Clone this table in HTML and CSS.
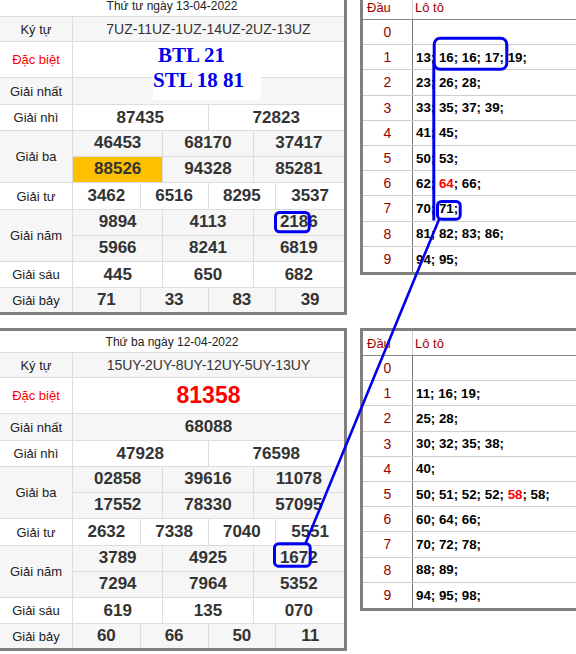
FILE: index.html
```html
<!DOCTYPE html>
<html lang="vi">
<head>
<meta charset="utf-8">
<title>Kết quả xổ số</title>
<link rel="stylesheet" href="styles.css">
</head>
<body>
<div class="page">

  <section class="kq">
    <div class="cap">Thứ tư ngày 13-04-2022</div>
    <div class="row r-kytu alt"><div class="lbl">Ký tự</div><div class="code">7UZ-11UZ-1UZ-14UZ-2UZ-13UZ</div></div>
    <div class="row r-db"><div class="lbl red">Đặc biệt</div><div class="vals c1"><div class="v"></div></div></div>
    <div class="row r-nhat alt"><div class="lbl">Giải nhất</div><div class="vals c1"><div class="v"></div></div></div>
    <div class="row r-std"><div class="lbl">Giải nhì</div><div class="vals c2"><div class="v">87435</div><div class="v">72823</div></div></div>
    <div class="row r-dbl alt"><div class="lbl">Giải ba</div><div class="vals c3 two"><div class="v">46453</div><div class="v">68170</div><div class="v">37417</div><div class="v hl">88526</div><div class="v">94328</div><div class="v">85281</div></div></div>
    <div class="row r-tu"><div class="lbl">Giải tư</div><div class="vals c4"><div class="v">3462</div><div class="v">6516</div><div class="v">8295</div><div class="v">3537</div></div></div>
    <div class="row r-dbl alt"><div class="lbl">Giải năm</div><div class="vals c3 two"><div class="v">9894</div><div class="v">4113</div><div class="v">2186</div><div class="v">5966</div><div class="v">8241</div><div class="v">6819</div></div></div>
    <div class="row r-std"><div class="lbl">Giải sáu</div><div class="vals c3"><div class="v">445</div><div class="v">650</div><div class="v">682</div></div></div>
    <div class="row r-bay alt"><div class="lbl">Giải bảy</div><div class="vals c4"><div class="v">71</div><div class="v">33</div><div class="v">83</div><div class="v">39</div></div></div>
    <div class="stamp"><span class="s1">BTL 21</span><span class="s2">STL 18 81</span></div>
  </section>

  <section class="loto">
    <div class="lrow head"><div class="dau">Đầu</div><div class="lt">Lô tô</div></div>
    <div class="lrow"><div class="dau">0</div><div class="lt"></div></div>
    <div class="lrow"><div class="dau">1</div><div class="lt"><span>13; 16; 16; 17; 19;</span></div></div>
    <div class="lrow"><div class="dau">2</div><div class="lt"><span>23; 26; 28;</span></div></div>
    <div class="lrow"><div class="dau">3</div><div class="lt"><span>33; 35; 37; 39;</span></div></div>
    <div class="lrow"><div class="dau">4</div><div class="lt"><span>41; 45;</span></div></div>
    <div class="lrow"><div class="dau">5</div><div class="lt"><span>50; 53;</span></div></div>
    <div class="lrow"><div class="dau">6</div><div class="lt"><span>62; <b class="hot">64</b>; 66;</span></div></div>
    <div class="lrow"><div class="dau">7</div><div class="lt"><span>70; 71;</span></div></div>
    <div class="lrow"><div class="dau">8</div><div class="lt"><span>81; 82; 83; 86;</span></div></div>
    <div class="lrow"><div class="dau">9</div><div class="lt"><span>94; 95;</span></div></div>
  </section>

  <section class="kq">
    <div class="cap">Thứ ba ngày 12-04-2022</div>
    <div class="row r-kytu alt"><div class="lbl">Ký tự</div><div class="code">15UY-2UY-8UY-12UY-5UY-13UY</div></div>
    <div class="row r-db"><div class="lbl red">Đặc biệt</div><div class="vals c1"><div class="v big">81358</div></div></div>
    <div class="row r-nhat alt"><div class="lbl">Giải nhất</div><div class="vals c1"><div class="v">68088</div></div></div>
    <div class="row r-std"><div class="lbl">Giải nhì</div><div class="vals c2"><div class="v">47928</div><div class="v">76598</div></div></div>
    <div class="row r-dbl alt"><div class="lbl">Giải ba</div><div class="vals c3 two"><div class="v">02858</div><div class="v">39616</div><div class="v">11078</div><div class="v">17552</div><div class="v">78330</div><div class="v">57095</div></div></div>
    <div class="row r-tu"><div class="lbl">Giải tư</div><div class="vals c4"><div class="v">2632</div><div class="v">7338</div><div class="v">7040</div><div class="v">5551</div></div></div>
    <div class="row r-dbl alt"><div class="lbl">Giải năm</div><div class="vals c3 two"><div class="v">3789</div><div class="v">4925</div><div class="v">1672</div><div class="v">7294</div><div class="v">7964</div><div class="v">5352</div></div></div>
    <div class="row r-std"><div class="lbl">Giải sáu</div><div class="vals c3"><div class="v">619</div><div class="v">135</div><div class="v">070</div></div></div>
    <div class="row r-bay alt"><div class="lbl">Giải bảy</div><div class="vals c4"><div class="v">60</div><div class="v">66</div><div class="v">50</div><div class="v">11</div></div></div>
  </section>

  <section class="loto">
    <div class="lrow head"><div class="dau">Đầu</div><div class="lt">Lô tô</div></div>
    <div class="lrow"><div class="dau">0</div><div class="lt"></div></div>
    <div class="lrow"><div class="dau">1</div><div class="lt"><span>11; 16; 19;</span></div></div>
    <div class="lrow"><div class="dau">2</div><div class="lt"><span>25; 28;</span></div></div>
    <div class="lrow"><div class="dau">3</div><div class="lt"><span>30; 32; 35; 38;</span></div></div>
    <div class="lrow"><div class="dau">4</div><div class="lt"><span>40;</span></div></div>
    <div class="lrow"><div class="dau">5</div><div class="lt"><span>50; 51; 52; 52; <b class="hot">58</b>; 58;</span></div></div>
    <div class="lrow"><div class="dau">6</div><div class="lt"><span>60; 64; 66;</span></div></div>
    <div class="lrow"><div class="dau">7</div><div class="lt"><span>70; 72; 78;</span></div></div>
    <div class="lrow"><div class="dau">8</div><div class="lt"><span>88; 89;</span></div></div>
    <div class="lrow"><div class="dau">9</div><div class="lt"><span>94; 95; 98;</span></div></div>
  </section>

</div>

<svg class="marks" width="576" height="654" viewBox="0 0 576 654" aria-hidden="true">
  <g fill="none" stroke="#0000f0" stroke-width="3" stroke-linecap="round">
    <rect x="434.2" y="38.2" width="72.6" height="31" rx="6"/>
    <line x1="433.8" y1="62" x2="433.8" y2="220.5" stroke-linecap="butt"/>
    <rect x="437.5" y="201.5" width="22.7" height="17.7" rx="4"/>
    <line x1="439" y1="219.5" x2="305.5" y2="543.5" stroke-width="2.6"/>
    <rect x="275.5" y="212.5" width="33.7" height="19.3" rx="4"/>
    <rect x="274.5" y="543.8" width="35.7" height="22.4" rx="4"/>
  </g>
</svg>
</body>
</html>
```

FILE: styles.css
```css
* { box-sizing: border-box; }

html, body {
  margin: 0;
  padding: 0;
}

body {
  width: 576px;
  height: 654px;
  overflow: hidden;
  background: #fff;
  font-family: "Liberation Sans", Arial, sans-serif;
  color: #222;
}

.page {
  display: grid;
  grid-template-columns: 350px 240px;
  column-gap: 13px;
  row-gap: 13px;
  align-items: start;
  margin: -8px 0 0 -3px;
}

/* ---------- result table ---------- */
.kq {
  position: relative;
  border: 3px solid #808080;
  background: #fff;
}

.cap {
  height: 22px;
  border-bottom: 1px solid #ddd;
  display: flex;
  align-items: center;
  justify-content: center;
  font-size: 12px;
  color: #222;
}

.row {
  display: grid;
  grid-template-columns: 73px 1fr;
  border-bottom: 1px solid #ddd;
}
.row.alt { background: #f6f6f6; }

.r-kytu { height: 25px; }
.r-db   { height: 36px; }
.r-nhat { height: 27px; }
.r-std  { height: 26px; }
.r-dbl  { height: 52px; }
.r-tu   { height: 27px; }
.r-bay  { height: 24px; border-bottom: none; }

.lbl {
  border-right: 1px solid #ddd;
  display: flex;
  align-items: center;
  justify-content: center;
  font-size: 13px;
  color: #222;
}
.lbl.red { color: #f00; }

.code {
  display: flex;
  align-items: center;
  justify-content: center;
  font-size: 14px;
  color: #333;
}

.vals {
  display: grid;
  grid-auto-rows: 1fr;
}
.vals.c1 { grid-template-columns: 1fr; }
.vals.c2 { grid-template-columns: repeat(2, 1fr); }
.vals.c3 { grid-template-columns: repeat(3, 1fr); }
.vals.c4 { grid-template-columns: repeat(4, 1fr); }

.v {
  display: flex;
  align-items: center;
  justify-content: center;
  font-size: 17px;
  font-weight: bold;
  color: #333;
  border-right: 1px solid #ddd;
}
.v:last-child { border-right: none; }
.c2 .v:nth-child(2n),
.c3 .v:nth-child(3n),
.c4 .v:nth-child(4n) { border-right: none; }
.two .v:nth-child(-n+3) { border-bottom: 1px solid #ddd; }

.v.hl { background: #ffc000; }
.v.big { font-size: 23px; color: #f00; }

.stamp {
  position: absolute;
  left: 153px;
  top: 48px;
  width: 108px;
  height: 57px;
  background: #fff;
  font-family: "Liberation Serif", "Times New Roman", serif;
  font-weight: bold;
  font-size: 21px;
  line-height: 25px;
  color: #0000ee;
}
.stamp span { display: block; white-space: nowrap; }
.stamp .s1 { padding-left: 5px; }

/* ---------- loto table ---------- */
.loto {
  border: 3px solid #808080;
  background: #fff;
}

.lrow {
  display: grid;
  grid-template-columns: 50px 1fr;
  height: 25.2px;
  border-bottom: 1px solid #ccc;
}
.lrow:last-child { border-bottom: none; }
.lrow.head {
  height: 25px;
  border-bottom: 1px solid #888;
}

.dau {
  border-right: 1px solid #777;
  display: flex;
  align-items: center;
  justify-content: center;
  font-size: 14px;
  color: #990000;
}
.lt {
  display: flex;
  align-items: center;
  padding-left: 3px;
  font-size: 13.3px;
  font-weight: bold;
  color: #000;
  white-space: pre;
}
.lt span { white-space: pre; }
.head .dau {
  justify-content: flex-start;
  padding-left: 4px;
  border-right-color: #ccc;
  font-size: 13px;
  color: #a00000;
}
.head .lt {
  font-weight: normal;
  font-size: 13px;
  color: #a00000;
  padding-left: 2px;
}
.hot { color: #f00; font-weight: bold; }

/* ---------- annotation overlay ---------- */
.marks {
  position: absolute;
  top: 0;
  left: 0;
  pointer-events: none;
}
```
